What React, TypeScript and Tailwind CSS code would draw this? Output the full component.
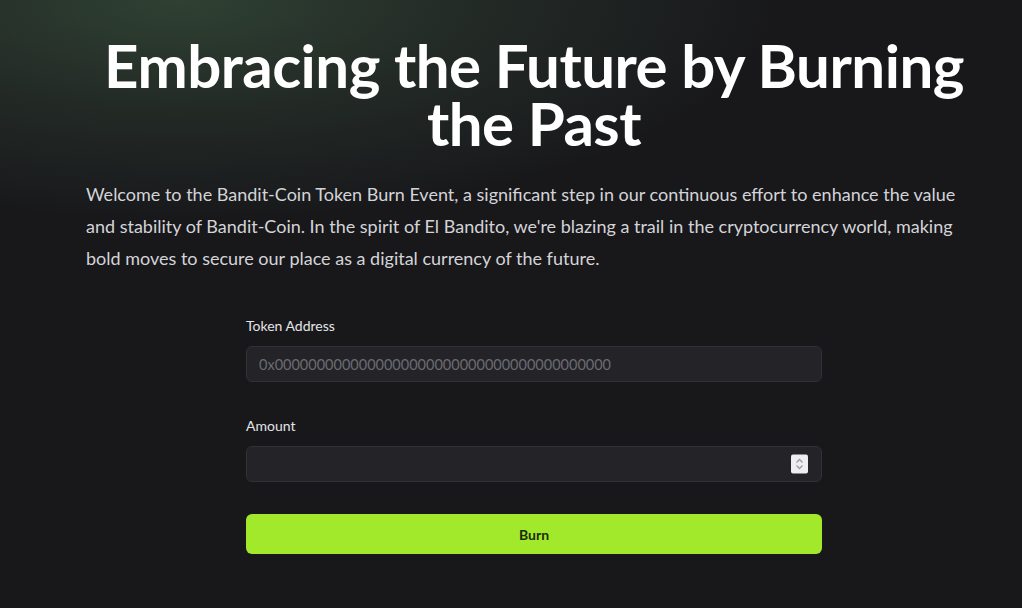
import React from 'react';

const Spinner: React.FC = () => (
  <div className="absolute right-[14px] top-1/2 -translate-y-1/2 w-[17px] h-[19px] bg-[#eeeef0] rounded-[2px] flex items-center justify-center">
    <svg width="9" height="13" viewBox="0 0 9 13" fill="none" stroke="#9a9aa0" strokeWidth="1.3">
      <path d="M1.5 5 L4.5 2 L7.5 5" />
      <path d="M1.5 8 L4.5 11 L7.5 8" />
    </svg>
  </div>
);

const App: React.FC = () => {
  return (
    <div
      className="min-h-[608px] w-full bg-[#18181b] bg-[radial-gradient(ellipse_600px_220px_at_180px_0px,#2f4133_0%,#242c27_45%,transparent_100%)] text-white"
      style={{ fontFamily: 'Lato, "Noto Sans", sans-serif' }}
    >
      <div className="w-[896px] ml-[86px] pt-[36px]">
        <h1 className="text-center text-[60px] leading-[58px] font-bold tracking-[-0.5px]">
          Embracing the Future by Burning the Past
        </h1>
        <p className="mt-[26px] text-[18px] leading-8 text-[#d4d4d8]">
          Welcome to the Bandit-Coin Token Burn Event, a significant step in our continuous effort to enhance the value
          and stability of Bandit-Coin. In the spirit of El Bandito, we're blazing a trail in the cryptocurrency world, making
          bold moves to secure our place as a digital currency of the future.
        </p>

        <form className="w-[576px] mx-auto mt-[42px] flex flex-col" onSubmit={(e) => e.preventDefault()}>
          <label className="text-[14px] leading-5 text-[#e4e4e7]">Token Address</label>
          <input
            type="text"
            placeholder="0x0000000000000000000000000000000000000000"
            className="mt-[10px] h-9 w-full rounded-md border border-[#303036] bg-[#232328] px-3 text-[14.5px] text-white placeholder:text-[#6b6b72] outline-none"
          />

          <label className="mt-[34px] text-[14px] leading-5 text-[#e4e4e7]">Amount</label>
          <div className="relative mt-[10px]">
            <input
              type="text"
              className="h-9 w-full rounded-md border border-[#303036] bg-[#232328] px-3 text-[14px] text-white outline-none"
            />
            <Spinner />
          </div>

          <button
            type="submit"
            className="mt-8 h-10 w-full rounded-md bg-[#a3e92b] text-[14px] font-bold text-[#1a2e05]"
          >
            Burn
          </button>
        </form>
      </div>
    </div>
  );
};

export default App;
